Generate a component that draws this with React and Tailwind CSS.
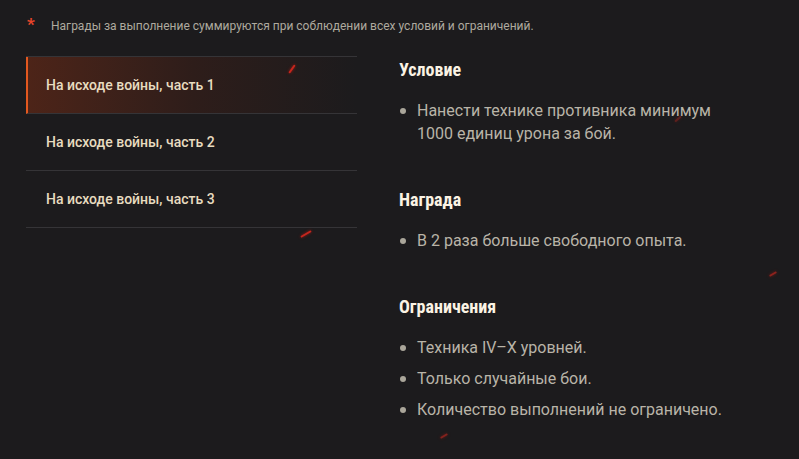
import React from 'react';

const quests = ['На исходе войны, часть 1', 'На исходе войны, часть 2', 'На исходе войны, часть 3'];

const sections = [
  { title: 'Условие', items: ['Нанести технике противника минимум 1000 единиц урона за бой.'] },
  { title: 'Награда', items: ['В 2 раза больше свободного опыта.'] },
  { title: 'Ограничения', items: ['Техника IV–X уровней.', 'Только случайные бои.', 'Количество выполнений не ограничено.'] },
];

// red sparks scattered on the backdrop
const sparks = [
  { x: 287, y: 68, w: 10, r: -55, o: 0.9 },
  { x: 300, y: 233, w: 12, r: -30, o: 0.9 },
  { x: 674, y: 118, w: 8, r: -40, o: 0.35 },
  { x: 769, y: 273, w: 8, r: -30, o: 0.6 },
  { x: 440, y: 435, w: 8, r: -30, o: 0.55 },
];

export default function App() {
  return (
    <div className="relative w-[799px] h-[459px] overflow-hidden bg-[#1c1b1d]" style={{ fontFamily: 'Roboto, "Noto Sans", sans-serif' }}>
      {sparks.map((s, i) => (
        <span
          key={i}
          className="absolute h-[2px] rounded-full bg-[#d8281e]"
          style={{ left: s.x, top: s.y, width: s.w, transform: `rotate(${s.r}deg)`, opacity: s.o, boxShadow: '0 0 3px #b01a14' }}
        />
      ))}

      <div className="flex items-start pl-[27px] pt-[16px]">
        <span className="w-[24px] text-[17px] leading-[17px] font-bold text-[#e8452a]">*</span>
        <p className="pt-[2px] text-[12px] leading-[16px] text-[#aeaa9f]">
          Награды за выполнение суммируются при соблюдении всех условий и ограничений.
        </p>
      </div>

      <div className="flex pt-[22px]">
        <ul className="ml-[26px] w-[331px] border-t border-[#353437]">
          {quests.map((q, i) => (
            <li
              key={q}
              className={
                'h-[57px] flex items-center border-b border-[#353437] text-[14px] font-medium text-[#e8dcc0] ' +
                (i === 0
                  ? 'border-l-2 border-l-[#e3581f] pl-[18px] bg-gradient-to-r from-[#4d2418] via-[#2e1d1a] via-50% to-transparent'
                  : 'pl-[20px]')
              }
            >
              {q}
            </li>
          ))}
        </ul>

        <div className="ml-[42px] w-[335px] pt-[3px]">
          {sections.map((s, i) => (
            <div key={s.title} className={i > 0 ? 'mt-[44px]' : ''}>
              <h3
                className="text-[18px] leading-[22px] font-bold text-[#fbf3e4]"
                style={{ fontFamily: '"Roboto Condensed", "Liberation Sans Narrow", "DejaVu Sans Condensed", Roboto, sans-serif', fontStretch: 'condensed' }}
              >
                {s.title}
              </h3>
              <ul className="mt-[18px] flex flex-col gap-[8px]">
                {s.items.map((t) => (
                  <li key={t} className="flex text-[16px] leading-[23px] text-[#b9b4a8]">
                    <span className="mt-[9px] mr-[11px] ml-[1px] w-[6px] h-[6px] shrink-0 rounded-full bg-[#aaa69a]" />
                    <span>{t}</span>
                  </li>
                ))}
              </ul>
            </div>
          ))}
        </div>
      </div>
    </div>
  );
}
